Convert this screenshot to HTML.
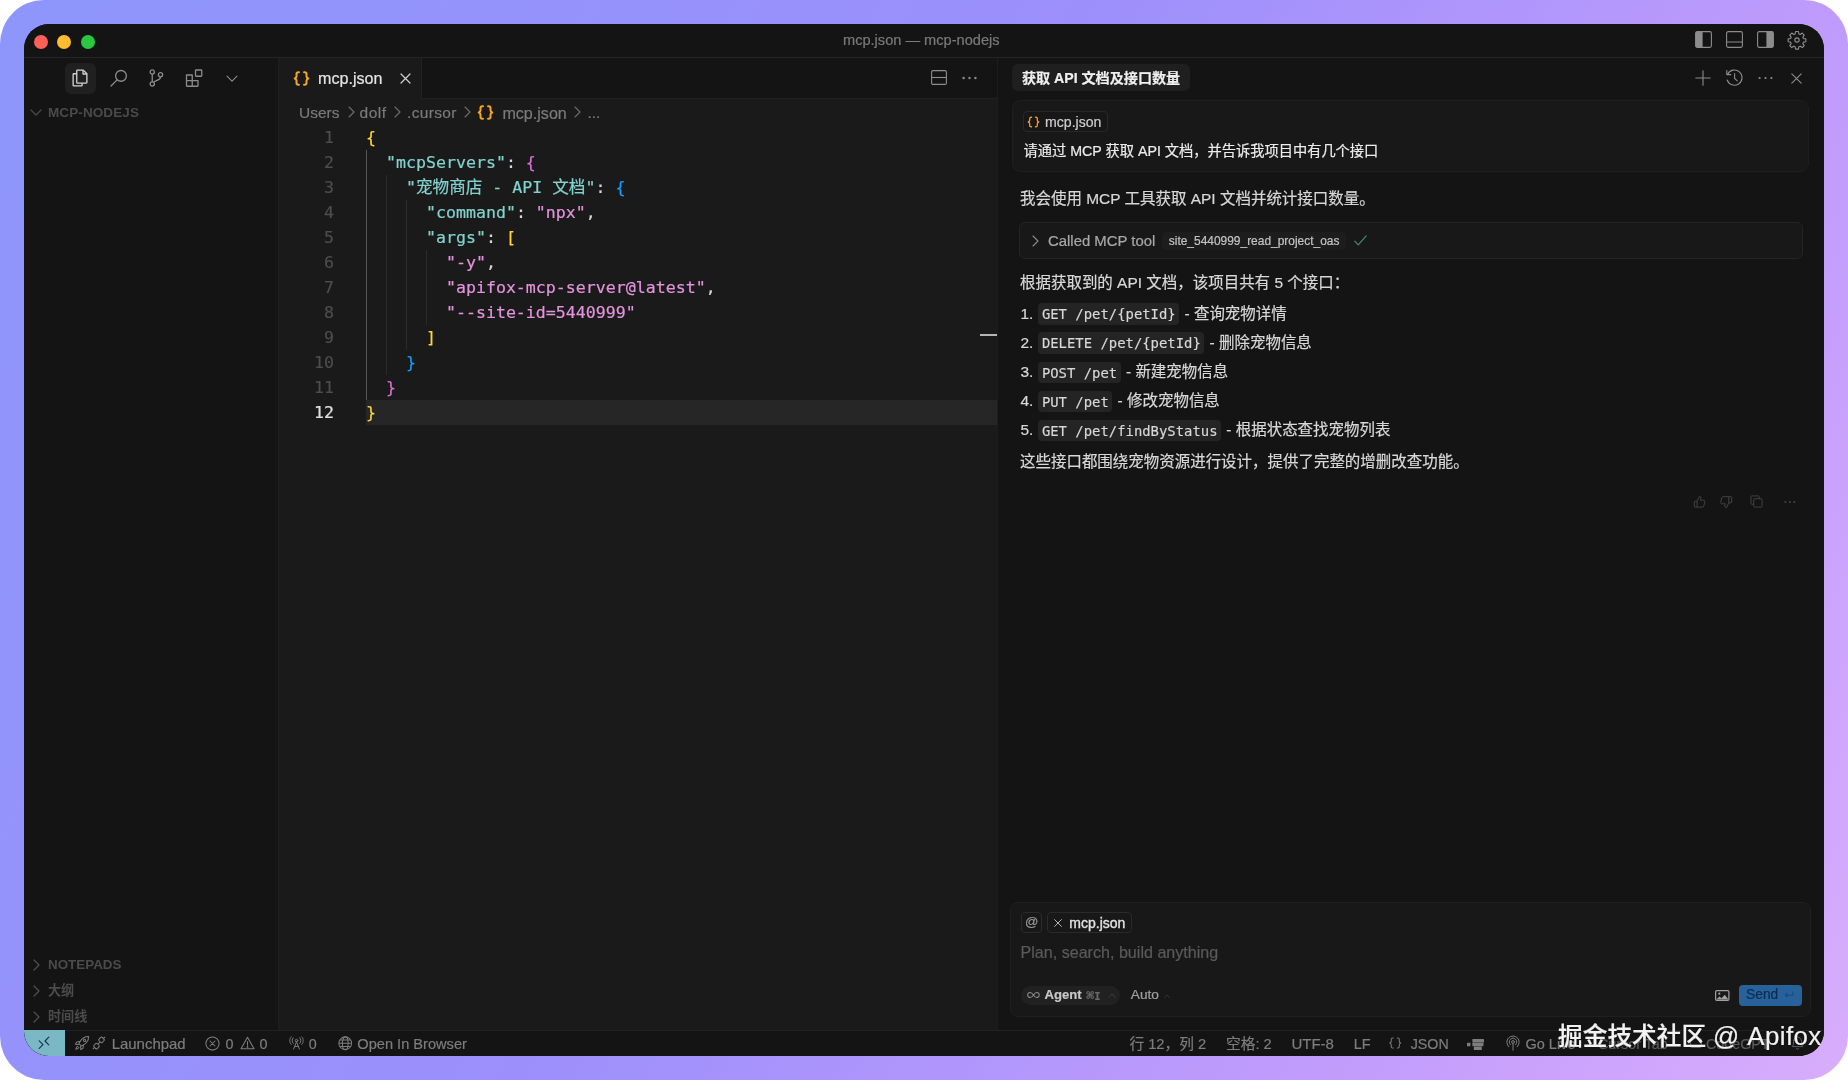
<!DOCTYPE html>
<html lang="zh-CN">
<head>
<meta charset="utf-8">
<title>mcp.json — mcp-nodejs</title>
<style>
*{box-sizing:border-box;margin:0;padding:0}
html,body{width:1848px;height:1080px;overflow:hidden;background:#fff}
body{font-family:"Liberation Sans","Noto Sans CJK SC",sans-serif;color:#d6d6dd;-webkit-font-smoothing:antialiased;-webkit-text-stroke-width:.2px}
.bg{position:absolute;left:0;top:0;width:1848px;height:1080px;border-radius:44px;background:linear-gradient(118deg,#8d96fb 0%,#9c8ffb 45%,#c39dfc 80%,#d8adfc 100%)}
.win{will-change:transform;position:absolute;left:24px;top:24px;width:1800px;height:1032px;border-radius:25px;overflow:hidden;background:#141414}
.abs{position:absolute;left:-24px;top:-24px;width:1848px;height:1080px}
.abs>*{position:absolute}
.t{white-space:nowrap;line-height:20px;height:20px}
svg{overflow:visible}
.mono{font-family:"DejaVu Sans Mono","Liberation Mono","Noto Sans CJK SC",monospace}
/* title bar */
.titlebar{left:24px;top:24px;width:1800px;height:34px;background:#141414;border-bottom:1px solid #252525}
.tl{width:14px;height:14px;border-radius:50%;top:34.6px}
/* sidebar */
.sidebar{left:24px;top:58px;width:255px;height:972px;background:#141414;border-right:1px solid #1e1e1e}
/* editor */
.editor{left:279px;top:58px;width:718px;height:972px;background:#1a1a1a}
.tabs{left:279px;top:58px;width:718px;height:41px;background:#141414;border-bottom:1px solid #222}
.tab{left:279px;top:58px;width:143px;height:41px;background:#1a1a1a;border-right:1px solid #222}
/* chat */
.chat{left:997px;top:58px;width:827px;height:972px;background:#141414;border-left:1px solid #1d1d1d}
/* status */
.status{left:24px;top:1030px;width:1800px;height:26px;background:#141414;border-top:1px solid #222}
.st{font-size:14.3px;color:#7d7d7d;top:1033.5px}
/* code */
.ln{left:290px;width:44px;text-align:right;font-size:16.6px;color:#4d4d4d;height:25px;line-height:25px}
.cl{left:366px;font-size:16.6px;height:25px;line-height:25px;white-space:pre;color:#d6d6dd}
.lnA{color:#e0e0e0}
.k{color:#82d2ce}.s{color:#e394dc}.b1{color:#ffd43b}.b2{color:#da70d6}.b3{color:#179fff}
.ct{font-size:15.47px;color:#d8d8d8;margin-top:.4px}
.code{font-size:13.9px;margin-left:.6px;margin-right:.9px;-webkit-text-stroke-width:.15px;background:#242424;border-radius:4px;padding:2.5px 3.6px 3px;color:#d8d8d8}
.guide{width:1px;background:#2b2b2b}
</style>
</head>
<body>
<div class="bg"></div>
<div class="win"><div class="abs">

<!-- TITLE BAR -->
<div class="titlebar"></div>
<div class="tl" style="left:33.8px;background:#fe5f57"></div>
<div class="tl" style="left:57.4px;background:#febc2e"></div>
<div class="tl" style="left:81.2px;background:#28c840"></div>
<div class="t" id="title" style="left:843px;top:30px;font-size:14.6px;color:#7a7a7a">mcp.json — mcp-nodejs</div>

<svg id="ti1" style="left:1695px;top:31px" width="17" height="17" viewBox="0 0 17 17" fill="none" stroke="#8c8c8c" stroke-width="1.1"><rect x=".6" y=".6" width="15.8" height="15.8" rx="1.6"/><path d="M1 1h6.6v15H1z" fill="#8c8c8c" stroke="none"/></svg>
<svg id="ti2" style="left:1726px;top:31px" width="17" height="17" viewBox="0 0 17 17" fill="none" stroke="#8c8c8c" stroke-width="1.1"><rect x=".6" y=".6" width="15.8" height="15.8" rx="1.6"/><path d="M.6 11h15.8"/></svg>
<svg id="ti3" style="left:1757px;top:31px" width="17" height="17" viewBox="0 0 17 17" fill="none" stroke="#8c8c8c" stroke-width="1.1"><rect x=".6" y=".6" width="15.8" height="15.8" rx="1.6"/><path d="M9.4 1H16v15H9.4z" fill="#8c8c8c" stroke="none"/></svg>
<svg id="ti4" style="left:1787px;top:30px" width="20" height="20" viewBox="0 0 24 24" fill="none" stroke="#8c8c8c" stroke-width="1.35" stroke-linejoin="round"><circle cx="12" cy="12" r="2.6"/><path d="M10.3 1.8h3.4l.5 2.9 1.7.7 2.4-1.7 2.4 2.4-1.7 2.4.7 1.7 2.9.5v3.4l-2.9.5-.7 1.7 1.7 2.4-2.4 2.4-2.4-1.7-1.7.7-.5 2.9h-3.4l-.5-2.9-1.7-.7-2.4 1.7-2.4-2.4 1.7-2.4-.7-1.7-2.9-.5v-3.4l2.9-.5.7-1.7-1.7-2.4 2.4-2.4 2.4 1.7 1.7-.7z"/></svg>

<!-- SIDEBAR -->
<div class="sidebar"></div>
<div style="left:65px;top:63px;width:30.5px;height:30.5px;border-radius:6px;background:#202020"></div>
<svg id="ic-files" style="left:70px;top:68px" width="20" height="20" viewBox="0 0 16 16" fill="none" stroke="#d4d4d4" stroke-width="1.05" stroke-linejoin="round"><path d="M6 1.7h4.6l2.9 2.9v6.9a.6.6 0 0 1-.6.6H6a.6.6 0 0 1-.6-.6V2.3a.6.6 0 0 1 .6-.6z"/><path d="M10.4 1.9v2.9h2.9"/><path d="M5.4 4.6H3.1a.6.6 0 0 0-.6.6v8.5a.6.6 0 0 0 .6.6h6a.6.6 0 0 0 .6-.6v-1.6"/></svg>
<svg id="ic-search" style="left:109.3px;top:68px" width="20" height="20" viewBox="0 0 16 16" fill="none" stroke="#8c8c8c" stroke-width="1.05" stroke-linecap="round"><circle cx="9.6" cy="6.3" r="4.3"/><path d="M6.5 9.5L1.6 14.4"/></svg>
<svg id="ic-git" style="left:146px;top:68px" width="20" height="20" viewBox="0 0 16 16" fill="none" stroke="#8c8c8c" stroke-width="1.05"><circle cx="5" cy="3.2" r="1.7"/><circle cx="5" cy="12.8" r="1.7"/><circle cx="11.6" cy="5.4" r="1.7"/><path d="M5 4.9v6.2"/><path d="M11.6 7.1c0 2.6-3.2 2.4-5.4 4.2"/></svg>
<svg id="ic-ext" style="left:184px;top:68px" width="20" height="20" viewBox="0 0 16 16" fill="none" stroke="#8c8c8c" stroke-width="1.05" stroke-linejoin="round"><path d="M2 5.6h4.6v9H2.4a.4.4 0 0 1-.4-.4z"/><path d="M6.6 10.1h4.6v4.1a.4.4 0 0 1-.4.4H6.6"/><path d="M2 10.1h4.6"/><rect x="9.2" y="1.6" width="5" height="5" rx=".6"/></svg>
<svg id="ic-chev" style="left:226px;top:75px" width="12" height="8" viewBox="0 0 12 8" fill="none" stroke="#8c8c8c" stroke-width="1.1" stroke-linecap="round" stroke-linejoin="round"><path d="M1 1.2l5 5 5-5"/></svg>

<svg style="left:30px;top:109px" width="12" height="8" viewBox="0 0 12 8" fill="none" stroke="#4a4a4a" stroke-width="1.2" stroke-linecap="round" stroke-linejoin="round"><path d="M1 1l5 5 5-5"/></svg>
<div class="t" id="sb-title" style="left:48px;top:102.6px;font-size:13.5px;font-weight:700;color:#4a4a4a;letter-spacing:.1px;-webkit-text-stroke-width:0">MCP-NODEJS</div>

<svg style="left:33px;top:959px" width="8" height="12" viewBox="0 0 8 12" fill="none" stroke="#4f4f4f" stroke-width="1.2" stroke-linecap="round" stroke-linejoin="round"><path d="M1 1l5 5-5 5"/></svg>
<div class="t" id="sb-notepads" style="left:48px;top:955.2px;font-size:13.4px;font-weight:700;color:#4b4b4b;-webkit-text-stroke-width:0">NOTEPADS</div>
<svg style="left:33px;top:985px" width="8" height="12" viewBox="0 0 8 12" fill="none" stroke="#4f4f4f" stroke-width="1.2" stroke-linecap="round" stroke-linejoin="round"><path d="M1 1l5 5-5 5"/></svg>
<div class="t" id="sb-outline" style="left:48px;top:981.3px;font-size:13.1px;font-weight:700;color:#4b4b4b;-webkit-text-stroke-width:0">大纲</div>
<svg style="left:33px;top:1011px" width="8" height="12" viewBox="0 0 8 12" fill="none" stroke="#4f4f4f" stroke-width="1.2" stroke-linecap="round" stroke-linejoin="round"><path d="M1 1l5 5-5 5"/></svg>
<div class="t" id="sb-timeline" style="left:48px;top:1007.3px;font-size:13.1px;font-weight:700;color:#4b4b4b;-webkit-text-stroke-width:0">时间线</div>

<!-- EDITOR -->
<div class="editor"></div>
<div class="tabs"></div>
<div class="tab"></div>
<svg style="left:293px;top:71px" width="17" height="15" viewBox="0 0 16 14" fill="none" stroke="#f5a623" stroke-width="1.9" stroke-linecap="round" stroke-linejoin="round"><path d="M5.6 1.2H4.9c-1 0-1.6.6-1.6 1.6v2.1c0 1-.6 1.7-1.7 2.1 1.1.4 1.7 1.1 1.7 2.1v2.1c0 1 .6 1.6 1.6 1.6h.7"/><path d="M10.4 1.2h.7c1 0 1.6.6 1.6 1.6v2.1c0 1 .6 1.7 1.7 2.1-1.1.4-1.7 1.1-1.7 2.1v2.1c0 1-.6 1.6-1.6 1.6h-.7"/></svg>
<div class="t" id="tab-name" style="left:318px;top:68.4px;font-size:16.1px;color:#e4e4e4">mcp.json</div>
<svg id="tab-x" style="left:400px;top:73px" width="11" height="11" viewBox="0 0 11 11" fill="none" stroke="#d0d0d0" stroke-width="1.2" stroke-linecap="round"><path d="M1 1l9 9M10 1l-9 9"/></svg>
<svg id="ic-split" style="left:931px;top:70px" width="16" height="15" viewBox="0 0 16 15" fill="none" stroke="#8c8c8c" stroke-width="1.1"><rect x=".6" y=".6" width="14.8" height="13.8" rx="1.4"/><path d="M.6 7.5h14.8"/></svg>
<svg id="ic-dots" style="left:962px;top:76px" width="15" height="4" viewBox="0 0 15 4" fill="#8c8c8c"><circle cx="1.6" cy="2" r="1.2"/><circle cx="7.5" cy="2" r="1.2"/><circle cx="13.4" cy="2" r="1.2"/></svg>

<div class="t" id="bc1" style="margin-top:.8px;left:299px;top:102px;font-size:15.5px;color:#7a7a7a">Users</div>
<svg style="left:348px;top:106px" width="7" height="12" viewBox="0 0 7 12" fill="none" stroke="#6e6e6e" stroke-width="1.1" stroke-linecap="round" stroke-linejoin="round"><path d="M1 1l5 5-5 5"/></svg>
<div class="t" id="bc2" style="margin-top:.8px;left:359.5px;top:102px;font-size:15.5px;color:#7a7a7a;letter-spacing:.55px">dolf</div>
<svg style="left:394px;top:106px" width="7" height="12" viewBox="0 0 7 12" fill="none" stroke="#6e6e6e" stroke-width="1.1" stroke-linecap="round" stroke-linejoin="round"><path d="M1 1l5 5-5 5"/></svg>
<div class="t" id="bc3" style="margin-top:.8px;left:407px;top:102px;font-size:15.5px;color:#7a7a7a;letter-spacing:.35px">.cursor</div>
<svg style="left:464px;top:106px" width="7" height="12" viewBox="0 0 7 12" fill="none" stroke="#6e6e6e" stroke-width="1.1" stroke-linecap="round" stroke-linejoin="round"><path d="M1 1l5 5-5 5"/></svg>
<svg style="left:477px;top:105px" width="17" height="15" viewBox="0 0 16 14" fill="none" stroke="#f5a623" stroke-width="1.9" stroke-linecap="round" stroke-linejoin="round"><path d="M5.6 1.2H4.9c-1 0-1.6.6-1.6 1.6v2.1c0 1-.6 1.7-1.7 2.1 1.1.4 1.7 1.1 1.7 2.1v2.1c0 1 .6 1.6 1.6 1.6h.7"/><path d="M10.4 1.2h.7c1 0 1.6.6 1.6 1.6v2.1c0 1 .6 1.7 1.7 2.1-1.1.4-1.7 1.1-1.7 2.1v2.1c0 1-.6 1.6-1.6 1.6h-.7"/></svg>
<div class="t" id="bc4" style="margin-top:.8px;left:502.4px;top:102px;font-size:16.1px;color:#7a7a7a">mcp.json</div>
<svg style="left:574px;top:106px" width="7" height="12" viewBox="0 0 7 12" fill="none" stroke="#6e6e6e" stroke-width="1.1" stroke-linecap="round" stroke-linejoin="round"><path d="M1 1l5 5-5 5"/></svg>
<div class="t" id="bc5" style="margin-top:.8px;left:587.5px;top:102px;font-size:15.5px;color:#7a7a7a">...</div>

<div style="left:366px;top:400px;width:631px;height:25px;background:#262626"></div>
<div class="ln mono" style="top:125px">1</div><div class="cl mono" id="cl1" style="top:125px"><span class="b1">{</span></div>
<div class="ln mono" style="top:150px">2</div><div class="cl mono" id="cl2" style="top:150px">  <span class="k">"mcpServers"</span>: <span class="b2">{</span></div>
<div class="ln mono" style="top:175px">3</div><div class="cl mono" id="cl3" style="top:175px">    <span class="k">"宠物商店 - API 文档"</span>: <span class="b3">{</span></div>
<div class="ln mono" style="top:200px">4</div><div class="cl mono" id="cl4" style="top:200px">      <span class="k">"command"</span>: <span class="s">"npx"</span>,</div>
<div class="ln mono" style="top:225px">5</div><div class="cl mono" id="cl5" style="top:225px">      <span class="k">"args"</span>: <span class="b1">[</span></div>
<div class="ln mono" style="top:250px">6</div><div class="cl mono" id="cl6" style="top:250px">        <span class="s">"-y"</span>,</div>
<div class="ln mono" style="top:275px">7</div><div class="cl mono" id="cl7" style="top:275px">        <span class="s">"apifox-mcp-server@latest"</span>,</div>
<div class="ln mono" style="top:300px">8</div><div class="cl mono" id="cl8" style="top:300px">        <span class="s">"--site-id=5440999"</span></div>
<div class="ln mono" style="top:325px">9</div><div class="cl mono" id="cl9" style="top:325px">      <span class="b1">]</span></div>
<div class="ln mono" style="top:350px">10</div><div class="cl mono" id="cl10" style="top:350px">    <span class="b3">}</span></div>
<div class="ln mono" style="top:375px">11</div><div class="cl mono" id="cl11" style="top:375px">  <span class="b2">}</span></div>
<div class="ln lnA mono" style="top:400px">12</div><div class="cl mono" id="cl12" style="top:400px"><span class="b1">}</span></div>
<div class="guide" style="left:366px;top:150px;height:250px;background:#565656"></div>
<div class="guide" style="left:386px;top:175px;height:200px"></div>
<div class="guide" style="left:406px;top:200px;height:150px"></div>
<div class="guide" style="left:426px;top:250px;height:75px"></div>
<div style="left:980px;top:334px;width:17px;height:2px;background:#b5b5b5"></div>


<!-- CHAT -->
<div class="chat"></div>
<div style="left:1012px;top:64px;width:178px;height:27px;border-radius:6px;background:#1f1f1f"></div>
<div class="t" id="chat-title" style="left:1022px;top:68px;font-size:14.1px;font-weight:700;color:#f0f0f0">获取 API 文档及接口数量</div>
<svg id="ic-plus" style="left:1695px;top:70px" width="16" height="16" viewBox="0 0 16 16" fill="none" stroke="#8c8c8c" stroke-width="1.1" stroke-linecap="round"><path d="M8 .8v14.4M.8 8h14.4"/></svg>
<svg id="ic-hist" style="left:1725px;top:69px" width="19" height="18" viewBox="0 0 19 18" fill="none" stroke="#8c8c8c" stroke-width="1.1" stroke-linecap="round" stroke-linejoin="round"><path d="M2.6 5.2A7.6 7.6 0 1 1 2.2 11"/><path d="M1.8 1.6v4h4"/><path d="M9.6 4.6v4.8l2.6 2.4"/></svg>
<svg id="ic-dots2" style="left:1758px;top:76px" width="15" height="4" viewBox="0 0 15 4" fill="#8c8c8c"><circle cx="1.6" cy="2" r="1.1"/><circle cx="7.5" cy="2" r="1.1"/><circle cx="13.4" cy="2" r="1.1"/></svg>
<svg id="ic-close" style="left:1791px;top:73px" width="11" height="11" viewBox="0 0 11 11" fill="none" stroke="#8c8c8c" stroke-width="1.1" stroke-linecap="round"><path d="M.8.8l9.4 9.4M10.2.8L.8 10.2"/></svg>

<div style="left:1012px;top:100px;width:797px;height:72px;border-radius:8px;background:#181818;border:1px solid #1e1e1e"></div>
<div style="left:1023px;top:111px;width:85px;height:21px;border-radius:4px;border:1px solid #282828;background:#171717"></div>
<svg style="left:1027px;top:115.5px" width="13" height="12" viewBox="0 0 16 14" fill="none" stroke="#e8962e" stroke-width="1.7" stroke-linecap="round" stroke-linejoin="round"><path d="M5.6 1.2H4.9c-1 0-1.6.6-1.6 1.6v2.1c0 1-.6 1.7-1.7 2.1 1.1.4 1.7 1.1 1.7 2.1v2.1c0 1 .6 1.6 1.6 1.6h.7"/><path d="M10.4 1.2h.7c1 0 1.6.6 1.6 1.6v2.1c0 1 .6 1.7 1.7 2.1-1.1.4-1.7 1.1-1.7 2.1v2.1c0 1-.6 1.6-1.6 1.6h-.7"/></svg>
<div class="t" id="pill1" style="left:1045px;top:111.5px;font-size:14.1px;color:#cfcfcf">mcp.json</div>
<div class="t" id="usermsg" style="left:1023.5px;top:140.5px;font-size:14.24px;color:#ececec">请通过 MCP 获取 API 文档，并告诉我项目中有几个接口</div>

<div class="t ct" id="a1" style="left:1020px;top:188.5px">我会使用 MCP 工具获取 API 文档并统计接口数量。</div>

<div style="left:1019px;top:222px;width:784px;height:37px;border-radius:6px;background:#181818;border:1px solid #242424"></div>
<svg style="left:1032px;top:235px" width="7" height="12" viewBox="0 0 7 12" fill="none" stroke="#8c8c8c" stroke-width="1.1" stroke-linecap="round" stroke-linejoin="round"><path d="M1 1l5 5-5 5"/></svg>
<div class="t" id="called" style="left:1048px;top:230.5px;font-size:14.9px;color:#a8a8a8">Called MCP tool</div>
<div style="left:1162px;top:232px;width:184px;height:18px;border-radius:4px;background:#1d1d1d"></div>
<div class="t" id="toolname" style="left:1168.8px;top:230.5px;font-size:11.94px;color:#c4c4c4">site_5440999_read_project_oas</div>
<svg id="ic-check" style="left:1354px;top:235px" width="13" height="11" viewBox="0 0 13 11" fill="none" stroke="#3f8f6f" stroke-width="1.2" stroke-linecap="round" stroke-linejoin="round"><path d="M.8 6.2l3.4 3.6L12.2.9"/></svg>

<div class="t ct" id="a2" style="left:1020px;top:273px">根据获取到的 API 文档，该项目共有 5 个接口：</div>
<div class="t ct" id="li1" style="left:1020.5px;top:303.5px">1. <span class="code mono" id="lc1">GET /pet/{petId}</span> - 查询宠物详情</div>
<div class="t ct" id="li2" style="left:1020.5px;top:332.6px">2. <span class="code mono" id="lc2">DELETE /pet/{petId}</span> - 删除宠物信息</div>
<div class="t ct" id="li3" style="left:1020.5px;top:361.7px">3. <span class="code mono" id="lc3">POST /pet</span> - 新建宠物信息</div>
<div class="t ct" id="li4" style="left:1020.5px;top:390.8px">4. <span class="code mono" id="lc4">PUT /pet</span> - 修改宠物信息</div>
<div class="t ct" id="li5" style="left:1020.5px;top:419.9px">5. <span class="code mono" id="lc5">GET /pet/findByStatus</span> - 根据状态查找宠物列表</div>

<div class="t ct" id="a3" style="left:1020px;top:451.5px">这些接口都围绕宠物资源进行设计，提供了完整的增删改查功能。</div>

<svg id="fb1" style="left:1692.5px;top:494.5px" width="13.5" height="14" viewBox="0 0 14 14" fill="none" stroke="#444" stroke-width="1" stroke-linejoin="round"><path d="M4.2 6.2L6.6 1.2c1 0 1.6.7 1.5 1.7L7.8 5.2h3.4c.8 0 1.3.7 1.1 1.4l-1.1 4.6c-.2.7-.7 1.1-1.4 1.1H4.2z"/><path d="M4.2 6.2H2.1c-.5 0-.8.3-.8.8v4.500c0 .5.3.8.8.8h2.100"/></svg>
<svg id="fb2" style="left:1719px;top:495px" width="14" height="14" viewBox="0 0 14 14" fill="none" stroke="#444" stroke-width="1" stroke-linejoin="round"><path d="M9.800 7.800L7.400 12.800c-1 0-1.600-.7-1.500-1.700l.3-2.300H2.800c-.8 0-1.300-.7-1.100-1.400l1.100-4.600c.2-.7.700-1.100 1.400-1.100h5.600z"/><path d="M9.800 7.800h2.100c.5 0 .8-.3.8-.8V2.500c0-.5-.3-.8-.8-.8H9.800"/></svg>
<svg id="fb3" style="left:1749.5px;top:495.2px" width="13" height="13" viewBox="0 0 14 14" fill="none" stroke="#444" stroke-width="1" stroke-linejoin="round"><rect x="4" y="4" width="9" height="9" rx="1"/><path d="M10 4V2c0-.6-.4-1-1-1H2c-.6 0-1 .4-1 1v7c0 .6.4 1 1 1h2"/></svg>
<svg id="fb4" style="left:1783.6px;top:500px" width="13" height="4" viewBox="0 0 13 4" fill="#444"><circle cx="1.5" cy="2" r="1.05"/><circle cx="5.9" cy="2" r="1.05"/><circle cx="10.3" cy="2" r="1.05"/></svg>

<div style="left:1010px;top:902px;width:801px;height:115px;border-radius:8px;background:#181818;border:1px solid #1f1f1f"></div>
<div style="left:1021.3px;top:912.2px;width:20.4px;height:20.8px;border-radius:4px;border:1px solid #2a2a2a"></div>
<div class="t" id="at" style="left:1024.9px;top:912px;font-size:13.2px;color:#9a9a9a">@</div>
<div style="left:1047px;top:912.2px;width:84.6px;height:20.8px;border-radius:4px;border:1px solid #2a2a2a"></div>
<svg style="left:1053.5px;top:919px" width="8" height="8" viewBox="0 0 8 8" fill="none" stroke="#b4b4b4" stroke-width="1" stroke-linecap="round"><path d="M.6.6l6.800 6.800M7.400.6L.6 7.400"/></svg>
<div class="t" id="pill2" style="left:1069.3px;top:912.5px;font-size:14px;color:#e2e2e2;-webkit-text-stroke:.35px #e2e2e2">mcp.json</div>
<div class="t" id="placeholder" style="left:1020.5px;top:942px;font-size:16.1px;color:#5a5a5a">Plan, search, build anything</div>

<div style="left:1020.5px;top:985.5px;width:99.500px;height:19.500px;border-radius:10px;background:#212121"></div>
<svg id="ic-inf" style="left:1026.8px;top:991.4px" width="12.9" height="8" viewBox="0 0 14 8" fill="none" stroke="#8c8c8c" stroke-width="1.1"><path d="M7 4C5.800 2.200 4.800 1.200 3.500 1.200a2.800 2.800 0 0 0 0 5.600C4.800 6.800 5.800 5.800 7 4s2.200-2.800 3.500-2.800a2.800 2.800 0 0 1 0 5.600C9.200 6.800 8.200 5.800 7 4z"/></svg>
<div class="t" id="agent" style="left:1044.5px;top:985px;font-size:13.1px;font-weight:700;color:#c8c8c8">Agent</div>
<div class="t mono" id="cmdi" style="left:1086.3px;top:985.5px;font-size:11.6px;color:#6a6a6a;font-weight:700"><span style="font-size:13px">⌘</span><span style="font-size:10.5px">I</span></div>
<svg style="left:1107.500px;top:992.500px" width="8" height="5" viewBox="0 0 8 5" fill="none" stroke="#3e3e3e" stroke-width="1" stroke-linecap="round" stroke-linejoin="round"><path d="M.8 4.200L4 1l3.200 3.200"/></svg>
<div class="t" id="auto" style="left:1130.800px;top:985px;font-size:13.7px;color:#a0a0a0">Auto</div>
<svg style="left:1164px;top:993.500px" width="6" height="4" viewBox="0 0 6 4" fill="none" stroke="#333" stroke-width="1" stroke-linecap="round" stroke-linejoin="round"><path d="M.6 3.400L3 1l2.400 2.400"/></svg>

<svg id="ic-img" style="left:1714.500px;top:990px" width="14.500" height="11" viewBox="0 0 14.500 11" fill="none" stroke="#a0a0a0" stroke-width="1.2" stroke-linejoin="round"><rect x=".6" y=".6" width="13.300" height="9.800" rx="1.200"/><circle cx="4.300" cy="3.700" r="1.100" fill="#a0a0a0" stroke="none"/><path d="M1.200 9.600l3.300-3 2 1.600 3.200-3.400 3.800 4.800z" fill="#a0a0a0" stroke="none"/></svg>
<div style="left:1738.500px;top:985px;width:63px;height:20.500px;border-radius:4px;background:#28629a"></div>
<div class="t" id="send" style="left:1746px;top:985px;font-size:13.8px;color:#0e2b4f">Send</div>
<svg id="ic-ret" style="left:1784px;top:991px" width="10" height="8" viewBox="0 0 10 8" fill="none" stroke="#1e4a7c" stroke-width="1.100" stroke-linecap="round" stroke-linejoin="round"><path d="M8.800.8v3.400H1.400M3.400 2.200L1.200 4.200l2.200 2"/></svg>

<!-- STATUS -->
<div class="status"></div>
<div style="left:24px;top:1030px;width:41px;height:26px;background:#7ab8c6"></div>
<svg id="s-remote" style="left:38px;top:1036px" width="12" height="14" viewBox="0 0 12 14" fill="none" stroke="#17384a" stroke-width="1.200" stroke-linecap="round" stroke-linejoin="round"><path d="M1.200 4.800L5 8.600l-3.800 3.800"/><path d="M10.800 1.200L7 5l3.800 3.800"/></svg>

<svg id="s-rocket" style="left:74px;top:1035px" width="16" height="16" viewBox="0 0 16 16" fill="none" stroke="#7d7d7d" stroke-width="1.050" stroke-linejoin="round" stroke-linecap="round"><path d="M14.600 1.400c-3.600 0-6.400 1.400-8.600 5.200L5 8.600 7.400 11l2-1c3.800-2.200 5.200-5 5.200-8.600z"/><path d="M6 6.600L2.800 7 1.400 9.200l3.400.2M9.400 10l-.4 3.200-2.200 1.400-.2-3.400"/><circle cx="10.600" cy="5.400" r="1.100"/><path d="M3.800 11.200c-1.200.4-1.800 1.600-1.900 3 1.400-.100 2.600-.700 3-1.900"/></svg>
<svg id="s-plug" style="left:92px;top:1036px" width="14" height="14" viewBox="0 0 14 14" fill="none" stroke="#7d7d7d" stroke-width="1.050" stroke-linecap="round" stroke-linejoin="round"><rect x="7.200" y="1.600" width="4.600" height="4.600" rx="1.200" transform="rotate(45 9.500 3.900)"/><rect x="2.200" y="7.800" width="4.600" height="4.600" rx="1.200" transform="rotate(45 4.500 10.100)"/><path d="M6.200 7.800l1.600-1.600M12.800 1.200l-1.500 1.500M1.200 12.800l1.500-1.500"/></svg>
<div class="t st" id="st-launch" style="left:111.700px;font-size:14.95px">Launchpad</div>

<svg id="s-err" style="left:205px;top:1036px" width="15" height="15" viewBox="0 0 15 15" fill="none" stroke="#7d7d7d" stroke-width="1.050" stroke-linecap="round"><circle cx="7.500" cy="7.500" r="6.600"/><path d="M5 5l5 5M10 5l-5 5"/></svg>
<div class="t st" id="st-e0" style="left:225.500px">0</div>
<svg id="s-warn" style="left:239.500px;top:1036px" width="15" height="14" viewBox="0 0 15 14" fill="none" stroke="#7d7d7d" stroke-width="1.050" stroke-linejoin="round" stroke-linecap="round"><path d="M7.500 1.200L14 12.800H1z"/><path d="M7.500 5.400v3.800"/><circle cx="7.500" cy="10.900" r=".4" fill="#7d7d7d"/></svg>
<div class="t st" id="st-w0" style="left:259.400px">0</div>

<svg id="s-radio" style="left:288.500px;top:1036px" width="15" height="14" viewBox="0 0 15 14" fill="none" stroke="#7d7d7d" stroke-width="1" stroke-linecap="round" stroke-linejoin="round"><circle cx="7.500" cy="4.600" r="1.300"/><path d="M7.500 5.900L4.600 13M7.500 5.900l2.900 7.100M5.600 10.400h3.800"/><path d="M4.200 1.800c-1.400 1.600-1.400 4 0 5.600M10.800 1.800c1.400 1.600 1.400 4 0 5.600M2.200.8c-2 2.200-2 5.400 0 7.600M12.800.8c2 2.200 2 5.400 0 7.600"/></svg>
<div class="t st" id="st-r0" style="left:308.700px">0</div>

<svg id="s-globe" style="left:337.500px;top:1036px" width="14.500" height="14.500" viewBox="0 0 15 15" fill="none" stroke="#7d7d7d" stroke-width="1.050"><circle cx="7.500" cy="7.500" r="6.600"/><ellipse cx="7.500" cy="7.500" rx="3" ry="6.600"/><path d="M1 7.500h13M1.800 4.200h11.400M1.800 10.800h11.400"/></svg>
<div class="t st" id="st-open" style="left:357.300px;font-size:14.62px">Open In Browser</div>

<div class="t st" id="st-pos" style="left:1129.400px;font-size:14.7px">行 12，列 2</div>
<div class="t st" id="st-sp" style="left:1226px;font-size:14.7px">空格: 2</div>
<div class="t st" id="st-enc" style="left:1291.400px;font-size:15px">UTF-8</div>
<div class="t st" id="st-lf" style="left:1353.800px;font-size:14.5px">LF</div>
<svg id="s-br" style="left:1388px;top:1037px" width="14.500" height="12" viewBox="0 0 16 14" fill="none" stroke="#7d7d7d" stroke-width="1.200" stroke-linecap="round" stroke-linejoin="round"><path d="M5.600 1.200H4.900c-1 0-1.600.6-1.600 1.600v2.100c0 1-.6 1.700-1.700 2.100 1.100.4 1.700 1.100 1.700 2.100v2.100c0 1 .6 1.600 1.600 1.600h.7"/><path d="M10.400 1.200h.7c1 0 1.600.6 1.600 1.600v2.100c0 1 .6 1.700 1.700 2.100-1.100.4-1.700 1.100-1.700 2.100v2.100c0 1-.6 1.600-1.600 1.600h-.7"/></svg>
<div class="t st" id="st-json" style="left:1410.700px;font-size:14.25px">JSON</div>
<svg id="s-pret" style="left:1467px;top:1038.5px" width="17" height="11" viewBox="0 0 17 11" fill="#7d7d7d"><rect x="5.4" y="0" width="11.600" height="3.400" rx=".5"/><rect x="0" y="3.800" width="3.400" height="3.400" rx=".5"/><rect x="5.400" y="3.800" width="11" height="3.400" rx=".5"/><rect x="6.800" y="7.600" width="8" height="3.400" rx=".5"/></svg>
<svg id="s-live" style="left:1505.500px;top:1036px" width="14" height="15" viewBox="0 0 14 15" fill="none" stroke="#7d7d7d" stroke-width="1" stroke-linecap="round"><circle cx="7" cy="6" r="1.400"/><path d="M7 7.400v6.800"/><path d="M4.400 8.800a3.800 3.800 0 1 1 5.200 0M2.800 10.800a6.200 6.200 0 1 1 8.400 0"/></svg>
<div class="t st" id="st-golive" style="left:1525.500px;font-size:14.5px">Go Live</div>
<div class="t st" id="st-ctab" style="left:1598px;font-size:14.3px;color:#5c5c5c">Cursor Tab</div>
<svg style="left:1690px;top:1038px" width="12" height="10" viewBox="0 0 12 10" fill="none" stroke="#5c5c5c" stroke-width="1"><rect x=".5" y=".5" width="11" height="9" rx="1"/></svg>
<div class="t st" id="st-gpt" style="left:1706px;font-size:14.3px;color:#5c5c5c">CodeGPT</div>
<svg style="left:1791px;top:1036px" width="13" height="14" viewBox="0 0 13 14" fill="none" stroke="#5c5c5c" stroke-width="1" stroke-linejoin="round"><path d="M6.500 1.200c-2.400 0-4 1.800-4 4.200v3L1.200 10.600h10.600L10.500 8.400v-3c0-2.400-1.600-4.200-4-4.200zM5.200 12.200c.2.600.7 1 1.300 1s1.100-.4 1.300-1"/></svg>


</div></div>
<div class="t" id="wm" style="position:absolute;will-change:transform;left:1557.500px;top:1018px;height:36px;line-height:36px;font-size:24.7px;color:#f2f2f2;text-shadow:0 0 1px rgba(0,0,0,.35)"><span style="font-weight:500">掘金技术社区</span> <span style="font-size:25.8px;letter-spacing:.45px">@ Apifox</span></div>
</body>
</html>
